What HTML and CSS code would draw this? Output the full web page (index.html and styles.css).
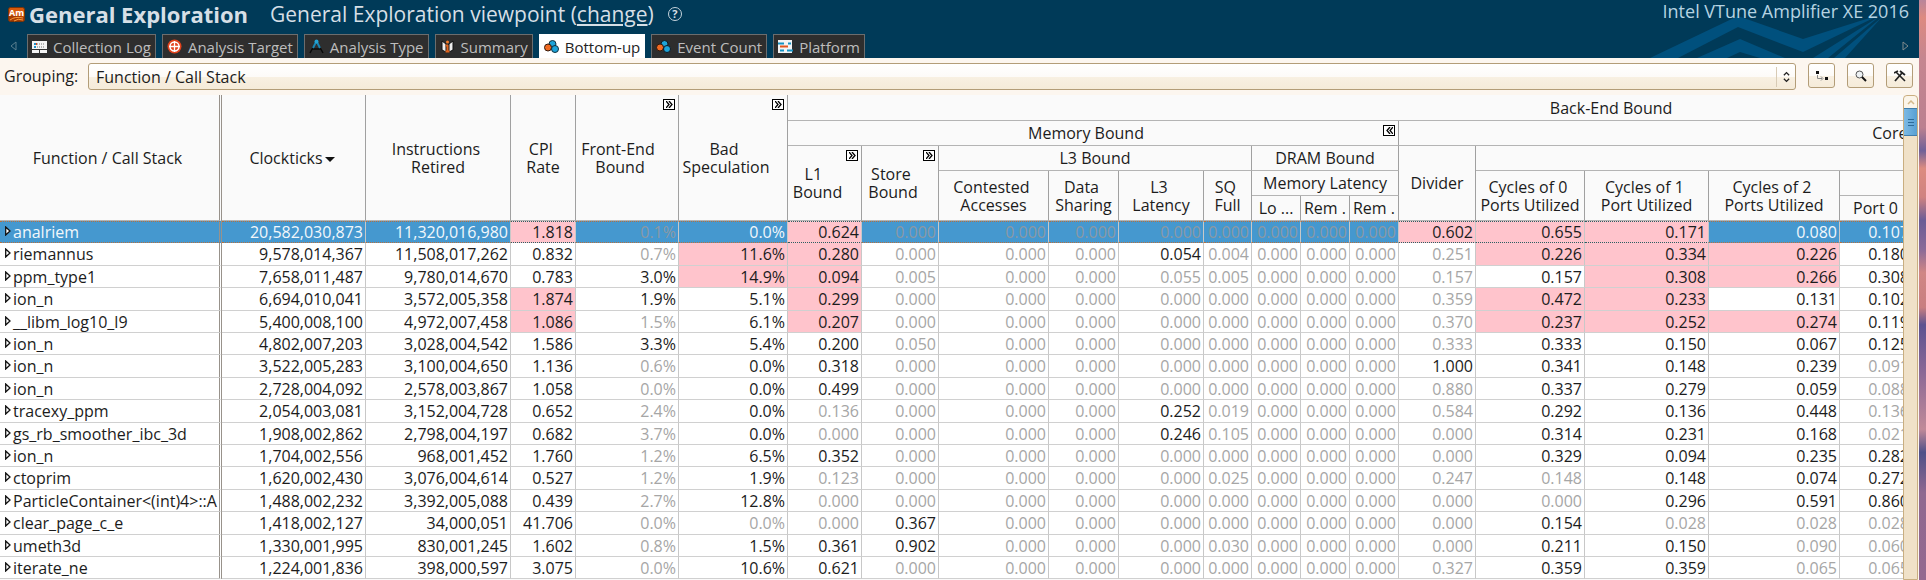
FILE: index.html
```html
<!DOCTYPE html>
<html lang="en">
<head>
<meta charset="utf-8">
<title>General Exploration</title>
<link rel="stylesheet" href="styles.css">
</head>
<body>
<div class="desktop">
<main class="window">
  <header class="banner">
    <svg class="banner-art" width="250" height="58" viewBox="0 0 250 58" aria-hidden="true">
      <path d="M0 58 88 16 153 39 232 14 153 52 88 27 28 58Z"/>
      <path d="M47 58 90 39 135 58H110L90 52 77 58Z"/>
      <path d="M163 58 230 16 178 58ZM184 58 232 17 195 58Z"/>
    </svg>
    <div class="title-row">
      <svg class="app-icon" width="17" height="15" viewBox="0 0 17 15" aria-hidden="true">
        <rect x="0.5" y="0.5" width="16" height="14" rx="2" fill="#d8590b" stroke="#7a3306"/>
        <path d="M1 9Q8 7 16 10V14H1Z" fill="#a53b04"/>
        <text x="1" y="9" class="app-icon-text">Am</text>
        <path d="M2 13Q7 9 15 11M6 14Q10 11 15 13" fill="none" stroke="#f79a3c"/>
      </svg>
      <h1>General Exploration</h1>
      <p class="viewpoint">General Exploration viewpoint (<a href="#change">change</a>)</p>
      <button class="help" aria-label="Help">?</button>
      <span class="product">Intel VTune Amplifier XE 2016</span>
    </div>
    <nav class="tabs">
      <button class="scroll-tabs" aria-label="Previous tabs"><svg width="7" height="10" viewBox="0 0 7 10"><path d="M6 1V9L1 5Z" fill="none" stroke="#5b7f8f"/></svg></button>
      <button class="tab"><svg width="15" height="12" viewBox="0 0 15 12"><rect width="15" height="12" fill="#f4f4f4"/><path d="M2 3H4M2 6H4" stroke="#1f8fc8" stroke-width="2"/><path d="M5 3H13M5 6H13" stroke="#777" stroke-dasharray="1 1"/><path d="M4 3H5" stroke="#e0491a" stroke-width="2"/><path d="M0 8.500H15M7.500 9V12" stroke="#333"/></svg>Collection Log</button>
      <button class="tab"><svg width="15" height="15" viewBox="0 0 15 15"><circle cx="7.500" cy="7.500" r="7" fill="#e2421c"/><circle cx="7.500" cy="7.500" r="4.500" fill="none" stroke="#fff" stroke-width="1.500"/><path d="M7.500 2V13M2 7.500H13" stroke="#fff" stroke-width="1.300"/></svg>Analysis Target</button>
      <button class="tab"><svg width="15" height="15" viewBox="0 0 15 15"><path d="M7 3 1 14M8 3 14 14M3 10H12" fill="none" stroke="#0a0a0a" stroke-width="1.500"/><path d="M7 3 4 9M8 3 11 9" stroke="#1b86b4" stroke-width="2"/><circle cx="7.500" cy="2.500" r="2" fill="#24a3d4"/></svg>Analysis Type</button>
      <button class="tab"><svg width="15" height="13" viewBox="0 0 15 13"><path d="M2 1 6 4V12L2 10ZM13 1 9 4V12L13 10Z" fill="#eee" stroke="#111"/><path d="M7.500 5V12M5.500 5.500H8M5.500 11.500H9.500" stroke="#e0641e" stroke-width="2"/><circle cx="7.500" cy="2" r="1.500" fill="#f47b2a"/></svg>Summary</button>
      <button class="tab active" aria-current="page"><svg width="15" height="13" viewBox="0 0 15 13"><circle cx="8.500" cy="4" r="3.500" fill="#1da3d8" stroke="#10303e"/><circle cx="4" cy="7.500" r="3.500" fill="#f06a22" stroke="#30180c"/><circle cx="11" cy="9" r="3.500" fill="#1da3d8" stroke="#10303e"/></svg>Bottom-up</button>
      <button class="tab"><svg width="15" height="13" viewBox="0 0 15 13"><circle cx="8.500" cy="4" r="3.500" fill="#1da3d8" stroke="#101820"/><circle cx="4" cy="7.500" r="3.500" fill="#f06a22" stroke="#30180c"/><circle cx="11" cy="9" r="3.500" fill="#1da3d8" stroke="#101820"/></svg>Event Count</button>
      <button class="tab"><svg width="15" height="13" viewBox="0 0 15 13"><rect width="14" height="13" fill="#f4f4f4"/><path d="M0 3.500H6M10 3.500H13M2 10.500H6M9 10.500H15" stroke="#1593c4" stroke-width="2"/><path d="M2 6.500H10" stroke="#e4551e" stroke-width="2"/></svg>Platform</button>
      <button class="scroll-tabs next" aria-label="Next tabs"><svg width="7" height="10" viewBox="0 0 7 10"><path d="M1 1V9L6 5Z" fill="none" stroke="#7f8a8c"/></svg></button>
    </nav>
  </header>

  <div class="toolbar">
    <label for="grouping">Grouping:</label>
    <div class="combo">
      <select id="grouping"><option>Function / Call Stack</option></select>
      <svg class="combo-arrows" width="8" height="12" viewBox="0 0 8 12" aria-hidden="true"><path d="M1 4 4 1 7 4M1 8 4 11 7 8" fill="none" stroke="#222" stroke-width="1.500"/></svg>
    </div>
    <button class="tool" aria-label="Customize grouping"><svg width="13" height="10" viewBox="0 0 13 10"><path d="M1 0H4V3H1ZM10 6H13V9H10Z" fill="#111"/><path d="M2.500 4V7.500H7M6 5.500 8 7.500 6 9.500" fill="none" stroke="#888"/></svg></button>
    <button class="tool" aria-label="Search"><svg width="12" height="12" viewBox="0 0 12 12"><circle cx="4.500" cy="4.500" r="3.500" fill="#eef2f4" stroke="#555"/><path d="M7 7 11 11" stroke="#111" stroke-width="2"/></svg></button>
    <button class="tool" aria-label="Options"><svg width="12" height="12" viewBox="0 0 12 12"><path d="M1 11 8 3M6 1 11 5" stroke="#222" stroke-width="1.800"/><path d="M2 2 11 11M0 3 4 1" stroke="#222" stroke-width="1.600"/></svg></button>
  </div>

  <div class="grid-area">
    <div class="grid-view">
      <table>
        <colgroup>
          <col class="c-name"><col class="c-clk"><col class="c-ins"><col class="c-cpi"><col class="c-fe"><col class="c-bad"><col class="c-l1"><col class="c-store"><col class="c-con"><col class="c-data"><col class="c-lat"><col class="c-sq"><col class="c-mem"><col class="c-mem"><col class="c-mem"><col class="c-div"><col class="c-p0"><col class="c-p1"><col class="c-p2"><col class="c-port"><col class="c-rest">
        </colgroup>
        <thead>
          <tr>
            <th rowspan="5" class="name">Function / Call Stack</th>
            <th rowspan="5">Clockticks<span class="sort"></span></th>
            <th rowspan="5">Instructions&nbsp;<br>Retired</th>
            <th rowspan="5">CPI&nbsp;<br>Rate</th>
            <th rowspan="5" class="togglable">Front-End&nbsp;<br>Bound<button class="toggle" aria-label="Expand"><svg width="7" height="7" viewBox="0 0 7 7"><path d="M0 0 3 3.500 0 7M3 0 6 3.500 3 7"/></svg></button></th>
            <th rowspan="5" class="togglable">Bad&nbsp;<br>Speculation<button class="toggle" aria-label="Expand"><svg width="7" height="7" viewBox="0 0 7 7"><path d="M0 0 3 3.500 0 7M3 0 6 3.500 3 7"/></svg></button></th>
            <th colspan="15">Back-End Bound</th>
          </tr>
          <tr>
            <th colspan="9" class="togglable">Memory Bound<button class="toggle" aria-label="Collapse"><svg width="7" height="7" viewBox="0 0 7 7"><path d="M4 0 1 3.500 4 7M7 0 4 3.500 7 7"/></svg></button></th>
            <th colspan="6">Core Bound</th>
          </tr>
          <tr>
            <th rowspan="3" class="togglable">L1&nbsp;&nbsp;<br>Bound<button class="toggle" aria-label="Expand"><svg width="7" height="7" viewBox="0 0 7 7"><path d="M0 0 3 3.500 0 7M3 0 6 3.500 3 7"/></svg></button></th>
            <th rowspan="3" class="togglable">Store&nbsp;<br>Bound<button class="toggle" aria-label="Expand"><svg width="7" height="7" viewBox="0 0 7 7"><path d="M0 0 3 3.500 0 7M3 0 6 3.500 3 7"/></svg></button></th>
            <th colspan="4">L3 Bound</th>
            <th colspan="3">DRAM Bound</th>
            <th rowspan="3">Divider</th>
            <th colspan="5"></th>
          </tr>
          <tr>
            <th rowspan="2">Contested&nbsp;<br>Accesses</th>
            <th rowspan="2">Data&nbsp;<br>Sharing</th>
            <th rowspan="2">L3&nbsp;<br>Latency</th>
            <th rowspan="2">SQ&nbsp;<br>Full</th>
            <th colspan="3">Memory Latency</th>
            <th rowspan="2">Cycles of 0&nbsp;<br>Ports Utilized</th>
            <th rowspan="2">Cycles of 1&nbsp;<br>Port Utilized</th>
            <th rowspan="2">Cycles of 2&nbsp;<br>Ports Utilized</th>
            <th colspan="2"></th>
          </tr>
          <tr><th>Lo ...</th><th>Rem .</th><th>Rem .</th><th>Port 0</th><th></th></tr>
        </thead>
        <tbody id="rows"></tbody>
      </table>
    </div>
    <div class="scrollbar" aria-hidden="true">
      <div class="scroll-up"><svg width="8" height="5" viewBox="0 0 8 5"><path d="M1 4 4 1 7 4" fill="none" stroke="#d3b98c" stroke-width="1.500"/></svg></div>
      <div class="thumb"><svg width="6" height="7" viewBox="0 0 6 7"><path d="M0 .5H6M0 3.500H6M0 6.500H6" stroke="#2d6b99"/></svg></div>
    </div>
  </div>
</main>
</div>
<script src="rows.js"></script>
</body>
</html>
```
FILE: styles.css
```css
* { box-sizing: border-box; }

body {
  margin: 0;
  font: 16px/18px "Open Sans", "Noto Sans", sans-serif;
  color: #1c1c1c;
}

button, select { font: inherit; color: inherit; }

.desktop {
  display: flex;
  height: 100vh;
  padding-right: 7px;
  overflow: hidden;
  background: linear-gradient(#b8859a 0%, #dd8a80 3%, #c58690 10%, #bb8090 22%, #6f6098 26%, #dc8c80 29%, #cf8280 34%, #6a5c96 38%, #8a6a98 43%, #d08684 47%, #c87e80 53%, #5c5290 56%, #8a6896 64%, #c08a98 74%, #4f5088 78%, #8f6890 85%, #94698f 100%);
}

.window {
  flex: 1;
  min-width: 0;
  display: flex;
  flex-direction: column;
  background: #fcf6ef;
}

/* Banner */
.banner {
  position: relative;
  display: flex;
  flex-direction: column;
  height: 58px;
  background: #003a58;
  color: #d6dfe6;
}

.banner-art { position: absolute; right: 19px; bottom: 0; fill: #00507d; }

.title-row {
  display: flex;
  align-items: center;
  height: 28px;
  flex: none;
  padding: 0 10px 0 8px;
  position: relative;
}

.app-icon { margin-right: 4px; }
.app-icon-text { font: bold 9px "Open Sans", sans-serif; fill: #fff; }

h1, .viewpoint { margin: 0; line-height: 28px; white-space: nowrap; }
h1 { margin-right: 22px; font-size: 22px; }
.viewpoint { font-size: 21px; }
.viewpoint a { color: inherit; }

.help {
  width: 14px;
  height: 14px;
  margin-left: 14px;
  padding: 0;
  border: 1px solid #c5d3dc;
  border-radius: 50%;
  background: none;
  font-size: 11px;
  font-weight: bold;
  line-height: 12px;
}

.product { margin-left: auto; font-size: 18px; line-height: 22px; align-self: flex-start; color: #b5d3e2; }

.tabs {
  display: flex;
  align-items: flex-end;
  gap: 6px;
  flex: 1;
  padding: 0 10px;
  position: relative;
}

.tab {
  display: flex;
  align-items: center;
  gap: 6px;
  height: 24px;
  padding: 0 4px;
  border: 1px solid #6b6d6e;
  border-bottom: 0;
  background: #2e2e2e;
  color: #bdbdbd;
  font-size: 15px;
  white-space: nowrap;
}

.tab.active { background: #fff; border-color: #fff; color: #222; }

.scroll-tabs {
  display: flex;
  align-items: center;
  width: 11px;
  height: 24px;
  padding: 0;
  border: 0;
  background: none;
}

.scroll-tabs.next { margin-left: auto; width: 7px; }

/* Grouping toolbar */
.toolbar {
  display: flex;
  align-items: flex-start;
  gap: 12px;
  height: 37px;
  flex: none;
  padding: 5px 6px 0 4px;
}

.toolbar label { line-height: 27px; width: 72px; }

.combo { position: relative; flex: 1; display: flex; }

.combo select {
  flex: 1;
  height: 27px;
  padding: 0 7px;
  border: 1px solid #b39d78;
  border-radius: 3px;
  background: linear-gradient(#fff 0, #fdfbf8 50%, #f8f0e2 52%, #f5ebd9 100%);
  appearance: none;
}

.combo-arrows {
  position: absolute;
  right: 0;
  top: 4px;
  width: 20px;
  height: 20px;
  padding: 4px 6px;
  border-left: 1px solid #d8cbb5;
}

.tool {
  display: flex;
  align-items: center;
  justify-content: center;
  width: 27px;
  height: 25px;
  padding: 0;
  border: 1px solid #b39d78;
  border-radius: 3px;
  background: linear-gradient(#fff 0, #fdfbf8 50%, #f8f0e2 52%, #f5ebd9 100%);
}

/* Grid */
.grid-area { flex: 1; min-height: 0; display: flex; padding-right: 1px; }
.grid-view { flex: 1; min-width: 0; overflow: hidden; background: #fafafa; }

table {
  width: 2435px;
  table-layout: fixed;
  border-collapse: separate;
  border-spacing: 0;
}

.c-name { width: 222px; }
.c-clk { width: 144px; }
.c-ins { width: 145px; }
.c-cpi { width: 65px; }
.c-fe { width: 103px; }
.c-bad { width: 109px; }
.c-l1 { width: 74px; }
.c-store { width: 77px; }
.c-con { width: 110px; }
.c-data { width: 70px; }
.c-lat { width: 85px; }
.c-sq { width: 48px; }
.c-mem { width: 49px; }
.c-div { width: 77px; }
.c-p0 { width: 109px; }
.c-p1 { width: 124px; }
.c-p2 { width: 131px; }
.c-port { width: 72px; }
.c-rest { width: 523px; }

th, td { white-space: nowrap; overflow: hidden; }

th {
  position: relative;
  padding: 0;
  border-right: 1px solid #a0a0a0;
  border-bottom: 1px solid #b4b4b4;
  font-weight: normal;
  background: #fafafa;
}

thead tr { height: 25px; }
thead tr:first-child { height: 26px; }
th.togglable { padding-right: 14px; }
th.name, td.name { border-right: 3px double #98928b; }
th.name { padding-right: 4px; }

.toggle {
  position: absolute;
  top: 4px;
  right: 3px;
  display: flex;
  align-items: center;
  justify-content: center;
  width: 12px;
  height: 11px;
  padding: 0;
  border: 1px solid #000;
  background: #fff;
}

.toggle svg { fill: none; stroke: #000; stroke-width: 1.3; }

.sort {
  display: inline-block;
  margin: 0 3px 0 2px;
  border: 5px solid transparent;
  border-top-color: #111;
  border-bottom: 0;
  vertical-align: 2px;
}

tbody tr { height: 22px; background: #fff; }
tbody tr:nth-child(5n+2), tbody tr:nth-child(5n+4) { height: 23px; }

td {
  padding: 0 2px 0 0;
  border-right: 1px solid #c8c8c8;
  border-bottom: 1px solid #d0d0d0;
  text-align: right;
}

td.name { padding: 0 0 0 5px; text-align: left; }
td.name svg { margin-right: 2px; vertical-align: 2px; }
td.dim { color: #a6a6a6; }
td.hot { background: #ffc4cc; }

tr.selected { background: #4598cf; color: #f2f7fb; }
tr.selected td { border-top: 1px dotted #b5703f; border-bottom: 1px dotted #b5703f; }
tr.selected td.hot { color: #1c1c1c; border-top-color: #2d5f62; border-bottom-color: #2d5f62; }
tr.selected td.dim { color: #8b99a4; }

/* Scrollbar */
.scrollbar {
  width: 15px;
  border: 1px solid #c9ae80;
  border-radius: 4px 4px 0 0;
  background: #f0e1c8;
}

.scroll-up, .thumb { display: flex; align-items: center; justify-content: center; }
.scroll-up { height: 12px; border-radius: 4px 4px 0 0; background: #fbf5ea; }
.thumb { height: 28px; border: 1px solid #3f7dab; border-width: 1px 0; background: linear-gradient(90deg, #7cb9e4, #57a0d3); }
```
FILE: rows.js
```js
// Each value may carry a suffix: "-" for an insignificant value, "!" for a flagged one.
const Z = "0.000-";
const data = [
  ["analriem", "20,582,030,873", "11,320,016,980", "1.818!", "0.1%-", "0.0%", "0.624!", Z, Z, Z, Z, Z, "0.602!", "0.655!", "0.171!", "0.080", "0.107"],
  ["riemannus", "9,578,014,367", "11,508,017,262", "0.832", "0.7%-", "11.6%!", "0.280!", Z, Z, Z, "0.054", "0.004-", "0.251-", "0.226!", "0.334!", "0.226!", "0.180"],
  ["ppm_type1", "7,658,011,487", "9,780,014,670", "0.783", "3.0%", "14.9%!", "0.094!", "0.005-", Z, Z, "0.055-", "0.005-", "0.157-", "0.157", "0.308!", "0.266!", "0.308"],
  ["ion_n", "6,694,010,041", "3,572,005,358", "1.874!", "1.9%", "5.1%", "0.299!", Z, Z, Z, Z, Z, "0.359-", "0.472!", "0.233!", "0.131", "0.102"],
  ["__libm_log10_l9", "5,400,008,100", "4,972,007,458", "1.086!", "1.5%-", "6.1%", "0.207!", Z, Z, Z, Z, Z, "0.370-", "0.237!", "0.252!", "0.274!", "0.119"],
  ["ion_n", "4,802,007,203", "3,028,004,542", "1.586", "3.3%", "5.4%", "0.200", "0.050-", Z, Z, Z, Z, "0.333-", "0.333", "0.150", "0.067", "0.125"],
  ["ion_n", "3,522,005,283", "3,100,004,650", "1.136", "0.6%-", "0.0%", "0.318", Z, Z, Z, Z, Z, "1.000", "0.341", "0.148", "0.239", "0.091-"],
  ["ion_n", "2,728,004,092", "2,578,003,867", "1.058", "0.0%-", "0.0%", "0.499", Z, Z, Z, Z, Z, "0.880-", "0.337", "0.279", "0.059", "0.088-"],
  ["tracexy_ppm", "2,054,003,081", "3,152,004,728", "0.652", "2.4%-", "0.0%", "0.136-", Z, Z, Z, "0.252", "0.019-", "0.584-", "0.292", "0.136", "0.448", "0.136-"],
  ["gs_rb_smoother_ibc_3d", "1,908,002,862", "2,798,004,197", "0.682", "3.7%-", "0.0%", Z, Z, Z, Z, "0.246", "0.105-", Z, "0.314", "0.231", "0.168", "0.021-"],
  ["ion_n", "1,704,002,556", "968,001,452", "1.760", "1.2%-", "6.5%", "0.352", Z, Z, Z, Z, Z, Z, "0.329", "0.094", "0.235", "0.282"],
  ["ctoprim", "1,620,002,430", "3,076,004,614", "0.527", "1.2%-", "1.9%", "0.123-", Z, Z, Z, Z, "0.025-", "0.247-", "0.148-", "0.148", "0.074", "0.272"],
  ["ParticleContainer<(int)4>::A", "1,488,002,232", "3,392,005,088", "0.439", "2.7%-", "12.8%", Z, Z, Z, Z, Z, Z, Z, Z, "0.296", "0.591", "0.860"],
  ["clear_page_c_e", "1,418,002,127", "34,000,051", "41.706", "0.0%-", "0.0%-", Z, "0.367", Z, Z, Z, Z, Z, "0.154", "0.028-", "0.028-", "0.028-"],
  ["umeth3d", "1,330,001,995", "830,001,245", "1.602", "0.8%-", "1.5%", "0.361", "0.902", Z, Z, Z, "0.030-", Z, "0.211", "0.150", "0.090-", "0.060-"],
  ["iterate_ne", "1,224,001,836", "398,000,597", "3.075", "0.0%-", "10.6%", "0.621", Z, Z, Z, Z, Z, "0.327-", "0.359", "0.359", "0.065-", "0.065-"]
];

const arrow = '<svg width="6" height="10" viewBox="0 0 6 10" aria-hidden="true"><path d="M.7 1V9L5 5Z" fill="#fff" stroke="#111" stroke-width="1.300"/></svg>';
const body = document.getElementById("rows");

data.forEach((values, index) => {
  const row = body.insertRow();
  if (index === 0) row.className = "selected";
  const [name, ...rest] = values;
  // The three DRAM latency columns are zero for every function.
  const numbers = [...rest.slice(0, 11), Z, Z, Z, ...rest.slice(11), ""];
  const first = row.insertCell();
  first.className = "name";
  first.innerHTML = arrow;
  first.append(name);
  numbers.forEach(value => {
    const cell = row.insertCell();
    if (value.endsWith("-")) cell.className = "dim";
    if (value.endsWith("!")) cell.className = "hot";
    cell.textContent = value.replace(/[-!]$/, "");
  });
});
```
